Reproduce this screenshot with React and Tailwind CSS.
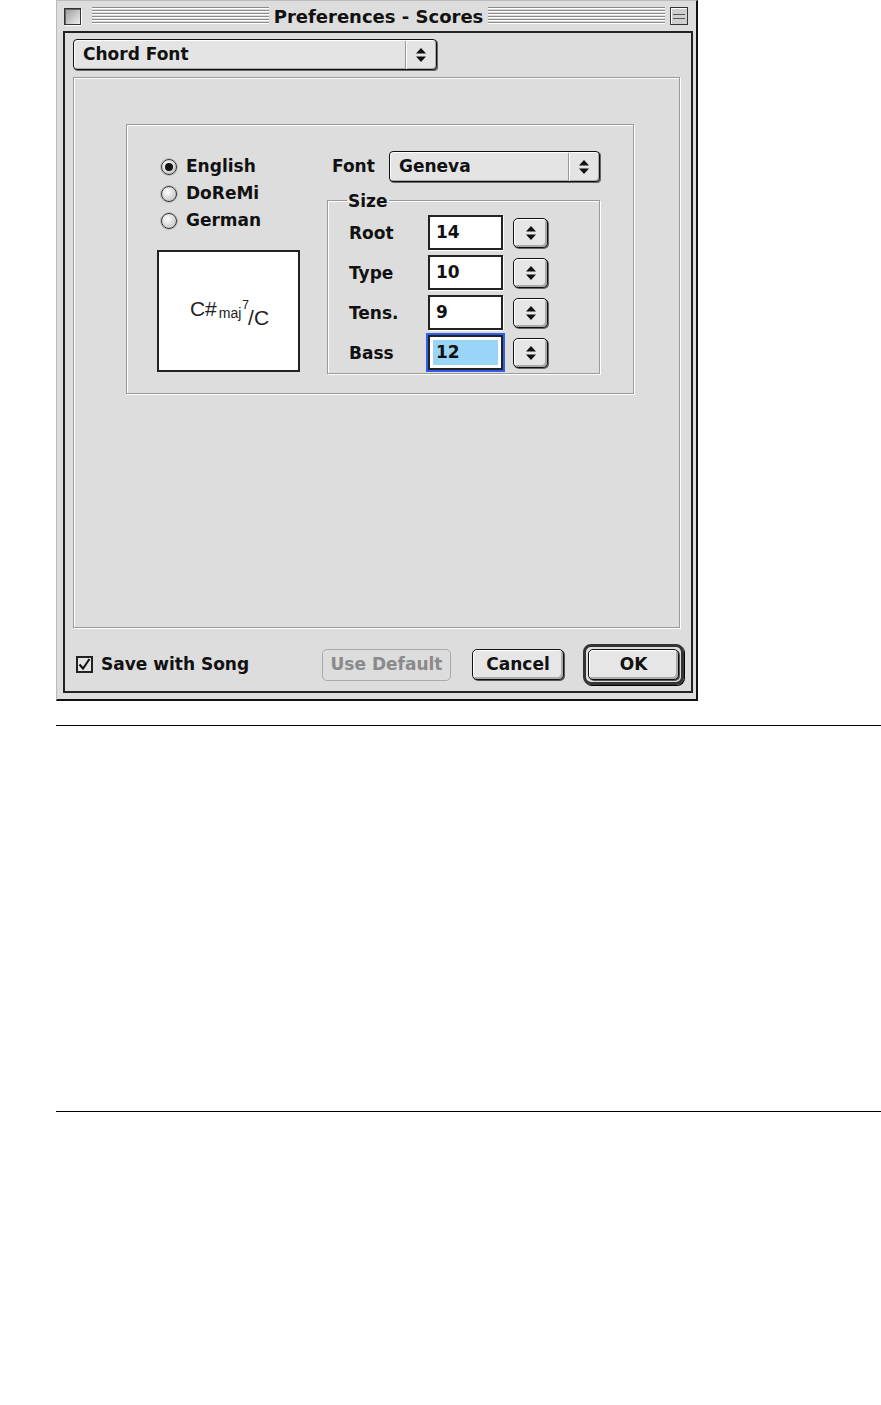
import React from "react";

const ui = "font-['DejaVu_Sans',sans-serif] font-bold text-[17px] text-[#111]";

function Arrows() {
  return (
    <svg width="12" height="18" viewBox="0 0 12 18">
      <path d="M6 2 L11 7.5 H1 Z" fill="#111" />
      <path d="M6 16 L11 10.5 H1 Z" fill="#111" />
    </svg>
  );
}

function Popup({ label, className }) {
  return (
    <div
      className={`flex rounded-[4px] border border-[#111] bg-[#e4e4e4] shadow-[1px_1px_0_#666,inset_1px_1px_0_#fff,inset_-1px_-1px_0_#aaa] ${className}`}
    >
      <div className="flex-1 flex items-center pl-[9px]">{label}</div>
      <div className="w-[31px] flex items-center justify-center border-l border-[#999] shadow-[inset_1px_0_0_#fff]">
        <Arrows />
      </div>
    </div>
  );
}

function Radio({ checked, label }) {
  return (
    <div className="flex items-center h-[27px] gap-[9px]">
      <span className="w-[16px] h-[16px] rounded-full border border-[#333] bg-[radial-gradient(circle_at_40%_35%,#ffffff,#b5b5b5)] flex items-center justify-center shadow-[0_0_0_1px_#bbb]">
        {checked && <span className="w-[8px] h-[8px] rounded-full bg-[#111]" />}
      </span>
      <span>{label}</span>
    </div>
  );
}

function Stepper() {
  return (
    <div className="w-[35px] h-[30px] rounded-[5px] border border-[#111] bg-[#e6e6e6] shadow-[1px_1px_0_#666,inset_1px_1px_0_#fff,inset_-2px_-2px_0_#aaa] flex items-center justify-center">
      <Arrows />
    </div>
  );
}

function SizeRow({ label, value, focused }) {
  return (
    <div className="flex items-center h-[35px]">
      <div className="w-[79px] pt-[2px]">{label}</div>
      {focused ? (
        <div className="w-[75px] h-[35px] border-2 border-[#222] bg-white shadow-[0_0_0_2px_#2f5fe8] p-[3px]">
          <div className="w-full h-full bg-[#9ad4f6] flex items-center pl-[3px]">{value}</div>
        </div>
      ) : (
        <div className="w-[75px] h-[35px] border-2 border-[#222] bg-white flex items-center pl-[6px] shadow-[1px_1px_0_#fff]">
          {value}
        </div>
      )}
      <div className="ml-[10px]">
        <Stepper />
      </div>
    </div>
  );
}

function Button({ children, className = "", disabled }) {
  return (
    <div
      className={`flex items-center justify-center rounded-[5px] ${
        disabled
          ? "border border-[#aaa] text-[#8a8a8a] bg-[#dddddd]"
          : "border border-[#111] bg-[#e6e6e6] shadow-[1px_1px_0_#555,inset_1px_1px_0_#fff,inset_-2px_-2px_0_#aaa]"
      } ${className}`}
    >
      {children}
    </div>
  );
}

export default function App() {
  return (
    <div className={`bg-white min-h-[1405px] ${ui}`}>
      {/* dialog window */}
      <div className="ml-[56px] w-[642px] h-[701px] bg-[#dddddd] border-l border-t border-[#bbb] border-r-2 border-b-2 border-r-[#111] border-b-[#111] pl-[6px] pr-[3px] flex flex-col">
        <div className="h-[30px] flex items-center">
          <div className="ml-px w-[17px] h-[17px] border border-[#333] bg-[linear-gradient(135deg,#999,#eee)] shadow-[inset_1px_1px_0_#666,1px_1px_0_#fff]" />
          <div className="ml-[11px] flex-1 h-[18px] bg-[repeating-linear-gradient(to_bottom,#8a8a8a_0px,#8a8a8a_1px,#ffffff_1px,#ffffff_2px,#dddddd_2px,#dddddd_3px)]" />
          <div className="px-[5px] pt-[2px] text-[18px] leading-none">Preferences - Scores</div>
          <div className="flex-1 h-[18px] bg-[repeating-linear-gradient(to_bottom,#8a8a8a_0px,#8a8a8a_1px,#ffffff_1px,#ffffff_2px,#dddddd_2px,#dddddd_3px)]" />
          <div className="ml-[5px] mr-[5px] w-[18px] h-[18px] border border-[#333] bg-[#cfcfcf] flex flex-col justify-center gap-[3px] px-[2px] shadow-[inset_1px_1px_0_#fff]">
            <div className="h-px bg-[#555]" />
            <div className="h-px bg-[#555]" />
          </div>
        </div>

        <div className="flex-1 mb-[6px] border-2 border-[#222] flex flex-col">
          <div className="pl-[8px] pt-[6px]">
            <Popup label="Chord Font" className="w-[364px] h-[31px] pt-px" />
          </div>

          <div className="ml-[8px] mr-[11px] mt-[7px] h-[551px] border border-[#9a9a9a] shadow-[1px_1px_0_#fff,inset_1px_1px_0_#fff]">
            <div className="ml-[52px] mt-[46px] w-[508px] h-[270px] border border-[#9a9a9a] shadow-[1px_1px_0_#fff,inset_1px_1px_0_#fff] pl-[30px] pt-[26px] flex gap-[27px]">
              <div className="w-[143px]">
                <div className="pl-[4px] pt-[2px]">
                  <Radio checked label="English" />
                  <Radio label="DoReMi" />
                  <Radio label="German" />
                </div>
                <div className="mt-[16px] w-[143px] h-[122px] bg-white border-2 border-[#222] flex items-center justify-center font-['Liberation_Sans',sans-serif] font-normal text-[#222]">
                  <div className="flex items-start leading-none pl-[2px] pt-[4px]">
                    <span className="text-[21px]">C#</span>
                    <span className="text-[14px] mt-[8px] ml-[2px]">maj</span>
                    <span className="text-[12px] ml-px mt-[1px]">7</span>
                    <span className="text-[21px] mt-[9px] -ml-px">/C</span>
                  </div>
                </div>
              </div>

              <div className="w-[273px]">
                <div className="flex items-center h-[31px]">
                  <div className="w-[62px] pl-[5px]">Font</div>
                  <Popup label="Geneva" className="w-[211px] h-[31px] pt-px" />
                </div>
                <fieldset className="mt-[7px] w-[273px] h-[185px] border border-[#9a9a9a] shadow-[1px_1px_0_#fff,inset_1px_1px_0_#fff] pl-[21px]">
                  <legend className="-ml-[2px] px-[1px] leading-[20px] pt-[2px]">Size</legend>
                  <div className="mt-[4px] flex flex-col gap-[5px]">
                    <SizeRow label="Root" value="14" />
                    <SizeRow label="Type" value="10" />
                    <SizeRow label="Tens." value="9" />
                    <SizeRow label="Bass" value="12" focused />
                  </div>
                </fieldset>
              </div>
            </div>
          </div>

          <div className="flex-1 flex items-center pt-[10px] pl-[11px] pr-[7px]">
            <div className="w-[17px] h-[17px] border-2 border-[#222] bg-[#e4e4e4] flex items-center justify-center">
              <svg width="13" height="13" viewBox="0 0 13 13">
                <path d="M1.5 6.5 L5 10.5 L11.5 1" stroke="#111" strokeWidth="2" fill="none" />
              </svg>
            </div>
            <div className="ml-[8px] pt-px">Save with Song</div>
            <div className="flex-1" />
            <Button disabled className="w-[129px] h-[32px] pt-px">Use Default</Button>
            <Button className="ml-[21px] w-[92px] h-[31px] pt-px">Cancel</Button>
            <div className="ml-[19px] w-[101px] h-[41px] rounded-[8px] border-[3px] border-[#333] shadow-[1px_1px_0_#000] p-[2px]">
              <Button className="w-full h-full pt-px">OK</Button>
            </div>
          </div>
        </div>
      </div>

      {/* page rules */}
      <div className="ml-[56px] mt-[24px] h-px bg-black" />
      <div className="ml-[56px] mt-[385px] h-px bg-black" />
    </div>
  );
}
